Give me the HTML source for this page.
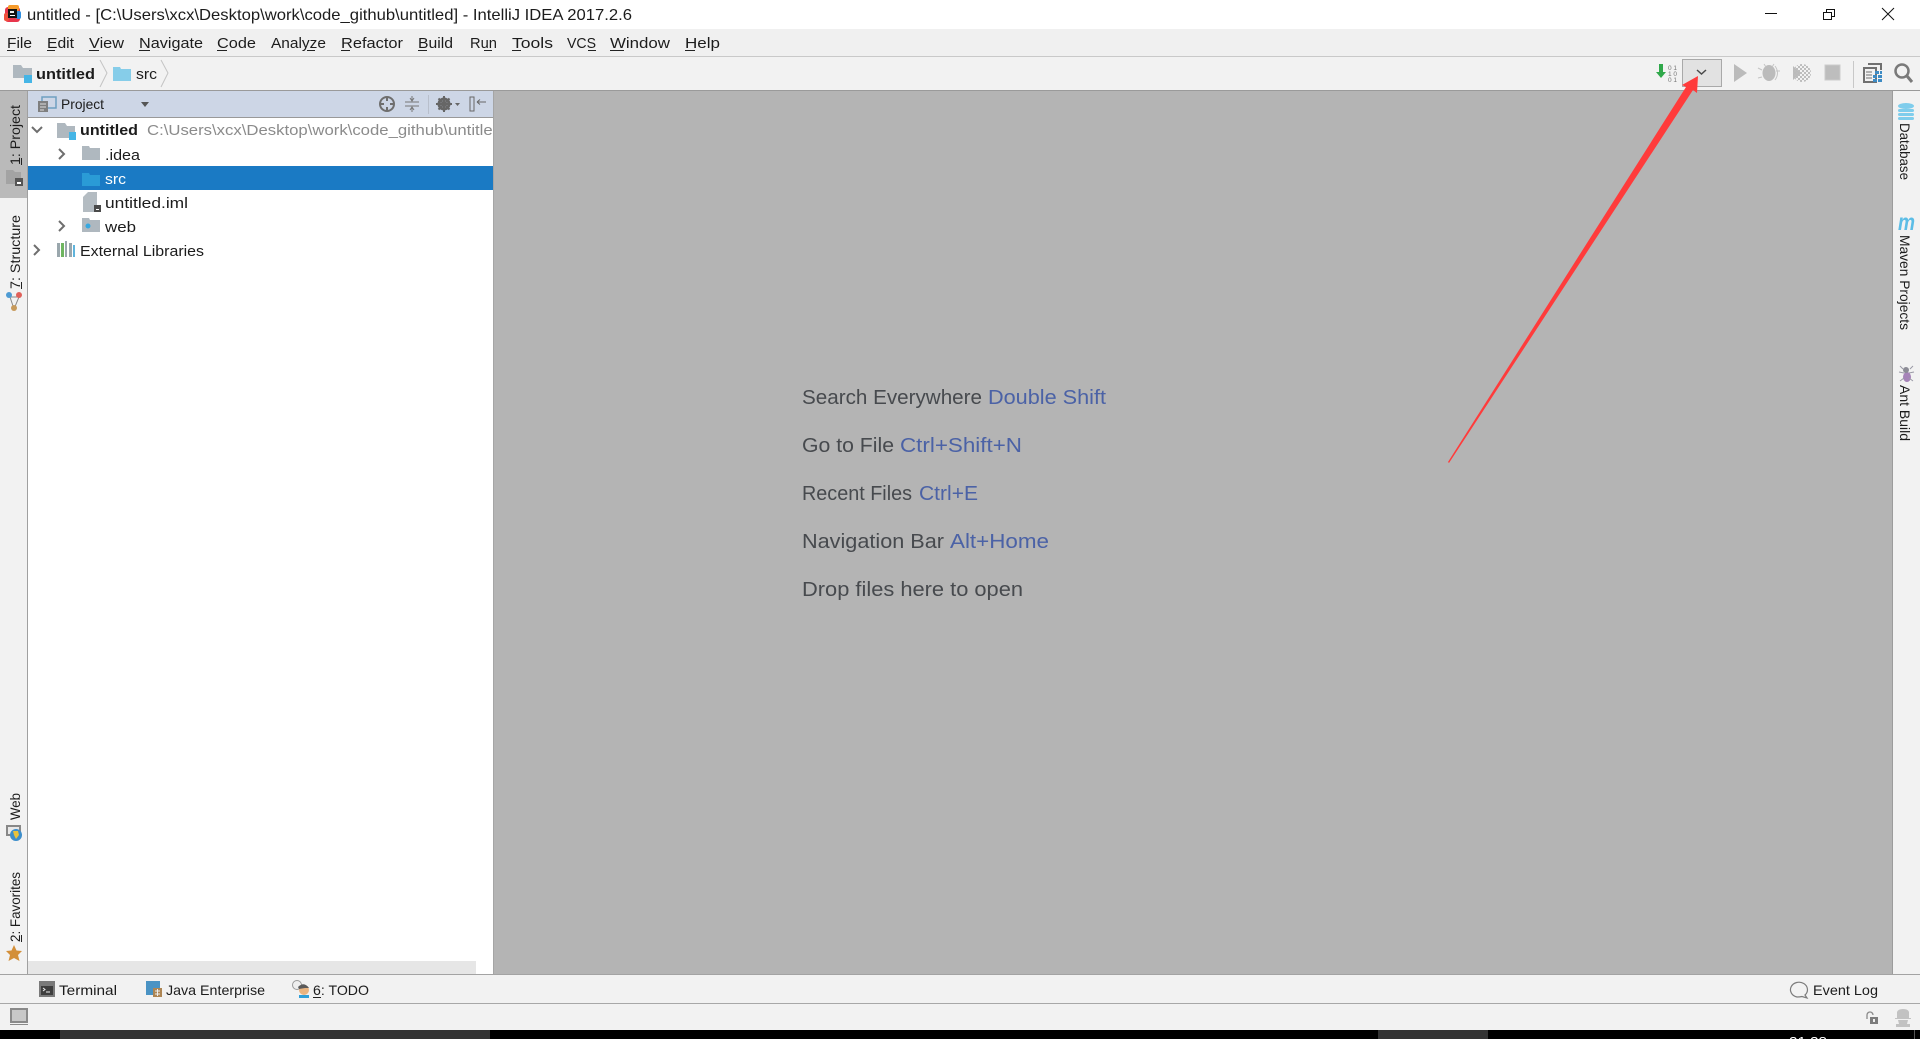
<!DOCTYPE html>
<html lang="en"><head><meta charset="utf-8"><title>untitled - IntelliJ IDEA</title>
<style>
html,body{margin:0;padding:0;background:#f2f2f2;overflow:hidden}
svg{display:block}
text{font-family:"Liberation Sans",sans-serif;fill:#1c1c1c;font-size:15px}
.h{font-size:20px;fill:#474a4e}.k{font-size:20px;fill:#4b62a6}
.t{font-size:15px}
</style></head><body>
<svg xmlns="http://www.w3.org/2000/svg" width="1920" height="1039" viewBox="0 0 1920 1039">
<defs>
<clipPath id="treeclip"><rect x="28" y="118" width="465" height="130"/></clipPath>
<pattern id="chk" width="4" height="4" patternUnits="userSpaceOnUse"><rect width="2" height="2" fill="#bdbdbd"/><rect x="2" y="2" width="2" height="2" fill="#bdbdbd"/></pattern>
</defs>
<!-- base -->
<rect width="1920" height="1039" fill="#f2f2f2"/>
<rect width="1920" height="29" fill="#fff"/>
<rect y="29" width="1920" height="27" fill="#f0f0f0"/>
<rect y="56" width="1920" height="1" fill="#c9c9c9"/>
<rect y="90" width="1920" height="1" fill="#9a9a9a"/>
<!-- editor -->
<rect x="493" y="91" width="1400" height="884" fill="#b4b4b4"/>
<!-- title -->
<rect x="5" y="7" width="15" height="15" rx="3" fill="#e8364c"/><rect x="8" y="5" width="11" height="6" rx="2" fill="#f59a2a"/><rect x="4" y="13" width="5" height="8" rx="2" fill="#f0503c"/><rect x="16" y="11" width="5" height="8" rx="2" fill="#2f8fe0"/><rect x="8" y="9" width="9" height="9" fill="#111"/><rect x="10" y="15" width="5" height="1" fill="#fff"/><rect x="10" y="11" width="4" height="2" fill="#eee"/>
<text x="27" y="20" font-size="16" style="font-size:16px" textLength="605" lengthAdjust="spacingAndGlyphs">untitled - [C:\Users\xcx\Desktop\work\code_github\untitled] - IntelliJ IDEA 2017.2.6</text>
<path d="M1765 13.5h12" stroke="#111" stroke-width="1" fill="none"/>
<path d="M1823.5 12.5h8v7h-8zM1826.5 12.5v-3h8v7h-3" stroke="#111" stroke-width="1" fill="none"/>
<path d="M1882 8l12 12M1894 8l-12 12" stroke="#111" stroke-width="1" fill="none"/>
<!-- menu -->
<g>
<text x="7" y="48" textLength="25" lengthAdjust="spacingAndGlyphs">File</text>
<text x="47" y="48" textLength="27" lengthAdjust="spacingAndGlyphs">Edit</text>
<text x="89" y="48" textLength="35" lengthAdjust="spacingAndGlyphs">View</text>
<text x="139" y="48" textLength="64" lengthAdjust="spacingAndGlyphs">Navigate</text>
<text x="217" y="48" textLength="39" lengthAdjust="spacingAndGlyphs">Code</text>
<text x="271" y="48" textLength="55" lengthAdjust="spacingAndGlyphs">Analyze</text>
<text x="341" y="48" textLength="62" lengthAdjust="spacingAndGlyphs">Refactor</text>
<text x="418" y="48" textLength="35" lengthAdjust="spacingAndGlyphs">Build</text>
<text x="470" y="48" textLength="27" lengthAdjust="spacingAndGlyphs">Run</text>
<text x="512" y="48" textLength="41" lengthAdjust="spacingAndGlyphs">Tools</text>
<text x="567" y="48" textLength="29" lengthAdjust="spacingAndGlyphs">VCS</text>
<text x="610" y="48" textLength="60" lengthAdjust="spacingAndGlyphs">Window</text>
<text x="685" y="48" textLength="35" lengthAdjust="spacingAndGlyphs">Help</text>
<path d="M7 50.5h8M47 50.5h8M89 50.5h10M139 50.5h11M217 50.5h10M307 50.5h8M341 50.5h9M418 50.5h9M484 50.5h8M512 50.5h9M588 50.5h8M610 50.5h14M685 50.5h10" stroke="#222" stroke-width="1" fill="none"/>
</g>
<!-- nav bar -->
<path d="M13 65h8l2 3h9v10H13z" fill="#afb8bf"/><rect x="24" y="75" width="8" height="8" fill="#45b5e6"/>
<text x="36" y="79" style="font-weight:700" textLength="59" lengthAdjust="spacingAndGlyphs">untitled</text>
<path d="M100 60l7 13-7 14" stroke="#c4c4c4" fill="none"/>
<path d="M113 67h7l1 2h10v12h-18z" fill="#86cde9"/>
<text x="136" y="79" textLength="21" lengthAdjust="spacingAndGlyphs">src</text>
<path d="M161 60l7 13-7 14" stroke="#c4c4c4" fill="none"/>
<!-- toolbar right -->
<path d="M1659 64h4v8h3l-5 6-5-6h3z" fill="#2fa84a"/>
<g fill="#777"><text x="1668" y="70" style="font-size:6.5px;fill:#777">0 1</text><text x="1668" y="76" style="font-size:6.5px;fill:#777">1 0</text><text x="1668" y="82" style="font-size:6.5px;fill:#777">0 1</text></g>
<rect x="1682.5" y="59.5" width="39" height="27" fill="#e2e2e2" stroke="#a9a9a9"/>
<path d="M1697 70l4.500 4 4.500-4" stroke="#4a4a4a" stroke-width="1.500" fill="none"/>
<path d="M1734 64l13 9-13 9z" fill="#bbb"/>
<ellipse cx="1769" cy="73" rx="6.500" ry="8" fill="#bbb"/><path d="M1775 66q5 7 0 14M1764 64l2 3M1774 64l-2 3M1758 68l4 2M1758 78l4-1M1776 71h4" stroke="#c4c4c4" fill="none"/>
<path d="M1793 66l8 7-8 7z" fill="#bbb"/><circle cx="1802" cy="73" r="9" fill="url(#chk)"/>
<rect x="1825" y="65" width="15" height="15" fill="#bdbdbd" stroke="#ccc"/>
<rect x="1853" y="61" width="1" height="27" fill="#c8c8c8"/>
<path d="M1868 64h13v6M1864 68h12v14h-12z" stroke="#707070" stroke-width="2" fill="none"/><path d="M1866 72h6M1866 75h6M1866 78h6" stroke="#707070" fill="none"/><g fill="#3d8bc4"><rect x="1875" y="71" width="4" height="3"/><rect x="1880" y="71" width="2" height="3"/><rect x="1873" y="75" width="4" height="3"/><rect x="1878" y="75" width="4" height="3"/><rect x="1873" y="79" width="4" height="3"/><rect x="1878" y="79" width="4" height="3"/></g>
<circle cx="1902" cy="71" r="6.500" fill="none" stroke="#7a7a7a" stroke-width="2.500"/><path d="M1907 76l5 6" stroke="#7a7a7a" stroke-width="3"/>
<!-- left stripe -->
<rect x="0" y="91" width="27" height="884" fill="#f2f2f2"/>
<rect x="0" y="91" width="27" height="107" fill="#bababa"/>
<rect x="27" y="91" width="1" height="884" fill="#a0a0a0"/>
<g transform="translate(20,165) rotate(-90)"><text textLength="60" lengthAdjust="spacingAndGlyphs" style="font-size:14px">1: Project</text><path d="M0 1.500h7" stroke="#222"/></g>
<path d="M6 170h7l2 2h6v12H6z" fill="#a3a3a3"/><rect x="15" y="178" width="8" height="8" fill="#555"/><rect x="17" y="182" width="4" height="2" fill="#fff"/>
<g transform="translate(20,289) rotate(-90)"><text textLength="74" lengthAdjust="spacingAndGlyphs" style="font-size:14px">7: Structure</text><path d="M0 1.500h7" stroke="#222"/></g>
<path d="M10 297l4 12 5-12z" fill="none" stroke="#8a8a8a"/><circle cx="9" cy="295" r="3" fill="#4e9bd3"/><circle cx="19" cy="295" r="3" fill="#e0605a"/><circle cx="14" cy="308" r="3" fill="#c79a5b"/>
<g transform="translate(20,820) rotate(-90)"><text textLength="27" lengthAdjust="spacingAndGlyphs" style="font-size:14px">Web</text></g>
<rect x="7" y="826" width="13" height="9" fill="#e8e8e8" stroke="#888" stroke-width="2"/><circle cx="16" cy="835" r="6" fill="#3d8ecb"/><path d="M13 831l5 0 1 4-3 4-2-4z" fill="#e8c23c"/>
<g transform="translate(20,942) rotate(-90)"><text textLength="70" lengthAdjust="spacingAndGlyphs" style="font-size:14px">2: Favorites</text><path d="M0 1.500h7" stroke="#222"/></g>
<path d="M14 945l2.500 5.500 5.500.5-4 4 1.500 6-5.500-3-5.500 3 1.500-6-4-4 5.500-.5z" fill="#d38f39"/>
<!-- project panel -->
<rect x="28" y="91" width="465" height="884" fill="#fff"/>
<rect x="28" y="91" width="465" height="26" fill="#cdd6e6"/>
<rect x="28" y="117" width="465" height="1" fill="#999"/>
<rect x="42" y="97" width="14" height="11" fill="none" stroke="#6f9fc0" stroke-width="1.500"/><rect x="38" y="101" width="10" height="11" fill="#7f7f7f"/><path d="M40 104h6M40 107h6M40 110h4" stroke="#ddd"/>
<text x="61" y="109" textLength="43" lengthAdjust="spacingAndGlyphs" style="font-size:14px">Project</text>
<path d="M141 102h8l-4 5z" fill="#555"/>
<circle cx="387" cy="104" r="7" fill="none" stroke="#6e6e6e" stroke-width="2"/><path d="M387 97v4M387 107v4M380 104h4M390 104h4" stroke="#6e6e6e" stroke-width="2"/>
<path d="M405 102h14M405 106h14M412 96v4M410 98l2 3 2-3M412 112v-4M410 110l2-3 2 3" stroke="#777" fill="none"/>
<rect x="428" y="95" width="1" height="19" fill="#b8bfcc"/>
<circle cx="444" cy="104" r="5" fill="none" stroke="#666" stroke-width="3"/><path d="M444 96v16M436 104h16M438.500 98.500l11 11M449.500 98.500l-11 11" stroke="#666" stroke-width="2"/>
<path d="M455 103h5l-2.500 3z" fill="#666"/>
<rect x="470" y="97" width="4" height="14" fill="none" stroke="#666"/><path d="M477 102h9M477 102l3-2.500M477 102l3 2.500" stroke="#666" fill="none"/>
<!-- tree -->
<rect x="28" y="166" width="465" height="24" fill="#1a7ac4"/>
<path d="M32 127l5 5 5-5" stroke="#6e6e6e" stroke-width="2" fill="none"/>
<path d="M59 149l5 5-5 5M59 221l5 5-5 5M34 245l5 5-5 5" stroke="#6e6e6e" stroke-width="2" fill="none"/>
<path d="M57 123h8l2 3h8v12H57z" fill="#afb8bf"/><rect x="69" y="132" width="7" height="8" fill="#45b5e6"/>
<g clip-path="url(#treeclip)">
<text x="80" y="135" style="font-weight:700" textLength="58" lengthAdjust="spacingAndGlyphs">untitled</text>
<text x="147" y="135" style="fill:#8b8b8b" textLength="355" lengthAdjust="spacingAndGlyphs">C:\Users\xcx\Desktop\work\code_github\untitled</text>
</g>
<path d="M82 146h7l1 2h10v12H82z" fill="#afb8bf"/>
<text x="105" y="160" textLength="35" lengthAdjust="spacingAndGlyphs">.idea</text>
<path d="M82 173h7l1 2h10v11H82z" fill="#2a9bd6"/>
<text x="105" y="184" style="fill:#fff" textLength="21" lengthAdjust="spacingAndGlyphs">src</text>
<path d="M88 192h9v20H83v-15z" fill="#b4bcc2"/><rect x="94" y="205" width="7" height="7" fill="#4a4a4a"/><rect x="96" y="209" width="3" height="1" fill="#fff"/>
<text x="105" y="208" textLength="83" lengthAdjust="spacingAndGlyphs">untitled.iml</text>
<path d="M82 218h7l1 2h10v12H82z" fill="#afb8bf"/><circle cx="88" cy="226" r="2.500" fill="#37a8e0"/>
<text x="105" y="232" textLength="31" lengthAdjust="spacingAndGlyphs">web</text>
<g><rect x="57" y="243" width="3" height="14" fill="#9aa7ad"/><rect x="61" y="243" width="3" height="14" fill="#6eb560"/><rect x="65" y="241" width="2" height="16" fill="#9aa7ad"/><rect x="69" y="243" width="3" height="14" fill="#9aa7ad"/><rect x="73" y="245" width="2" height="12" fill="#5fb4dc"/></g>
<text x="80" y="256" textLength="124" lengthAdjust="spacingAndGlyphs">External Libraries</text>
<rect x="28" y="961" width="448" height="13" fill="#e6e6e6"/>
<rect x="493" y="91" width="1" height="884" fill="#a5a5a5"/>
<!-- hints -->
<text class="h" x="802" y="404" textLength="180" lengthAdjust="spacingAndGlyphs">Search Everywhere</text><text class="k" x="988" y="404" textLength="118" lengthAdjust="spacingAndGlyphs">Double Shift</text>
<text class="h" x="802" y="452" textLength="92" lengthAdjust="spacingAndGlyphs">Go to File</text><text class="k" x="900" y="452" textLength="122" lengthAdjust="spacingAndGlyphs">Ctrl+Shift+N</text>
<text class="h" x="802" y="500" textLength="110" lengthAdjust="spacingAndGlyphs">Recent Files</text><text class="k" x="919" y="500" textLength="59" lengthAdjust="spacingAndGlyphs">Ctrl+E</text>
<text class="h" x="802" y="548" textLength="142" lengthAdjust="spacingAndGlyphs">Navigation Bar</text><text class="k" x="950" y="548" textLength="99" lengthAdjust="spacingAndGlyphs">Alt+Home</text>
<text class="h" x="802" y="596" textLength="221" lengthAdjust="spacingAndGlyphs">Drop files here to open</text>
<!-- right stripe -->
<rect x="1893" y="91" width="27" height="884" fill="#f2f2f2"/>
<rect x="1892" y="91" width="1" height="884" fill="#9c9c9c"/>
<g fill="#7fcdec"><ellipse cx="1906" cy="106" rx="8" ry="3"/><rect x="1898" y="109" width="16" height="3" rx="1.500"/><rect x="1898" y="113" width="16" height="3" rx="1.500"/><rect x="1898" y="117" width="16" height="3" rx="1.500"/></g>
<g transform="translate(1900,123) rotate(90)"><text textLength="57" lengthAdjust="spacingAndGlyphs" style="font-size:14px">Database</text></g>
<text x="1898" y="230" style="font-size:23px;font-style:italic;font-weight:700;fill:#5cbde6" textLength="17" lengthAdjust="spacingAndGlyphs">m</text>
<g transform="translate(1900,235) rotate(90)"><text textLength="95" lengthAdjust="spacingAndGlyphs" style="font-size:14px">Maven Projects</text></g>
<ellipse cx="1907" cy="377" rx="4" ry="5" fill="#a583b8"/><circle cx="1906" cy="370" r="3" fill="#8c8c96"/><path d="M1900 366l3 3M1913 366l-3 3M1899 372l5 1M1914 372l-5 1M1900 381l4-3M1913 381l-4-3" stroke="#9a9aa6" fill="none"/>
<g transform="translate(1900,385) rotate(90)"><text textLength="56" lengthAdjust="spacingAndGlyphs" style="font-size:14px">Ant Build</text></g>
<!-- bottom toolbar -->
<rect x="0" y="974" width="1920" height="1" fill="#a3a3a3"/>
<rect y="975" width="1920" height="28" fill="#f2f2f2"/>
<rect y="1003" width="1920" height="1" fill="#a8a8a8"/>
<rect x="39" y="981" width="16" height="16" fill="#7a7a7a"/><rect x="41" y="986" width="12" height="9" fill="#3e3e3e"/><path d="M43 988l2 1.500-2 1.500M46 992h4" stroke="#eee" fill="none"/>
<text x="59" y="995" textLength="58" lengthAdjust="spacingAndGlyphs" style="font-size:14px">Terminal</text>
<rect x="146" y="981" width="14" height="14" fill="#4a93c4"/><rect x="153" y="988" width="9" height="9" fill="#ad8553"/><path d="M155 991h5M155 994h5M157.500 989v7" stroke="#eee" fill="none"/>
<text x="166" y="995" textLength="99" lengthAdjust="spacingAndGlyphs" style="font-size:14px">Java Enterprise</text>
<circle cx="297" cy="985" r="4.500" fill="#eee" stroke="#999"/><circle cx="304" cy="990" r="5" fill="#e9b480"/><path d="M298 987q6-6 11 1l-4 0-6 1z" fill="#5a5a5a"/><rect x="299" y="995" width="10" height="3" fill="#2f9fd8"/>
<text x="313" y="995" textLength="56" lengthAdjust="spacingAndGlyphs" style="font-size:14px">6: TODO</text><path d="M313 997.500h8" stroke="#222"/>
<path d="M1805 995l2 3-5-1.500q-2 .5-5 .5a8.500 7.500 0 1 1 8-2z" fill="none" stroke="#7c7c7c" stroke-width="1.200"/>
<text x="1813" y="995" textLength="65" lengthAdjust="spacingAndGlyphs" style="font-size:14px">Event Log</text>
<!-- status -->
<rect y="1004" width="1920" height="26" fill="#f2f2f2"/>
<rect x="11" y="1009" width="16" height="13" fill="#c8c8c8" stroke="#8a8a8a" stroke-width="2"/><rect x="10" y="1024" width="18" height="1" fill="#8a8a8a"/>
<path d="M1867 1019v-4a3 3 0 0 1 6 0" fill="none" stroke="#8a8a8a" stroke-width="1.300"/><rect x="1870" y="1017" width="8" height="7" fill="#7c7c7c"/><rect x="1873" y="1019" width="2" height="3" fill="#eee"/>
<path d="M1897 1018v-6q1-3 6-3t6 3v6zM1895 1018h16v1h-16zM1898 1020h10l-1 4h3v3h-14v-3h3z" fill="#c2c2c2"/>
<!-- taskbar -->
<rect y="1030" width="1920" height="9" fill="#000"/>
<rect x="60" y="1030" width="430" height="9" fill="#333"/>
<rect x="1378" y="1030" width="110" height="9" fill="#333"/>
<text x="1789" y="1046" style="font-size:13px;fill:#fff" textLength="38" lengthAdjust="spacingAndGlyphs">21:38</text>
<rect x="1914" y="1030" width="1" height="9" fill="#555"/>
<!-- arrow -->
<path d="M1448 462l238-375-4-2 16-9-1 17-4-3L1449 463z" fill="#ff3b3b"/>
</svg>
</body></html>
